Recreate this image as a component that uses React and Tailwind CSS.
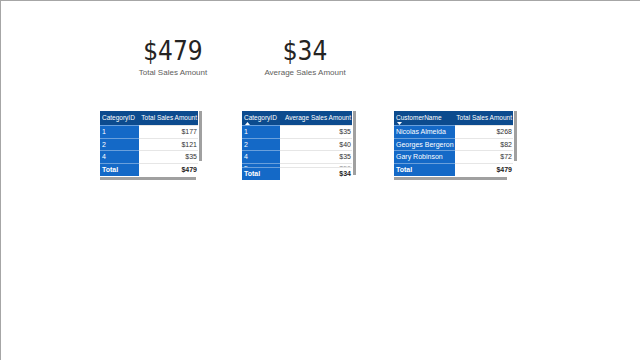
const tableFont = "font-['Segoe_UI','Liberation_Sans',sans-serif]";

const Kpi = ({ value, label }) => (
  <div className="w-[106px] flex flex-col items-center">
    <p className="font-['DejaVu_Sans_Condensed','Roboto',sans-serif] text-[26px] leading-[30px] text-[#252423]">
      {value}
    </p>
    <p className={`${tableFont} text-[8px] leading-[10px] mt-[2px] text-[#605e5c]`}>
      {label}
    </p>
  </div>
);

const SortArrow = ({ up }) => (
  <svg width="5" height="3" viewBox="0 0 5 3" className="ml-[1px]">
    {up ? <path d="M0 3 L2.5 0 L5 3 Z" fill="#fff" /> : <path d="M0 0 L2.5 3 L5 0 Z" fill="#fff" />}
  </svg>
);

const DataTable = ({ c1, c2, h1, h2, rows, total, sort, partial, vbar, hbar }) => (
  <div className={`${tableFont} flex flex-col`}>
    <div className="flex">
      <div className="flex flex-col">
        <div className="flex h-[14px] bg-[#0c4b8e] text-white text-[6.5px] leading-[9px]">
          <div className={`${c1} pl-[2px] pt-[2px] flex flex-col`}>
            <span>{h1}</span>
            {sort && <SortArrow up={sort === "up"} />}
          </div>
          <div className={`${c2} pt-[2px] pr-[1px] text-right whitespace-nowrap overflow-hidden`}>{h2}</div>
        </div>
        {rows.map(([a, b], i) => (
          <div key={i} className="flex h-[12.5px] text-[7px] leading-[12px]">
            <div className={`${c1} bg-[#1469c7] text-white pl-[2px] border-t border-[#6aa0dc] whitespace-nowrap overflow-hidden`}>{a}</div>
            <div className={`${c2} bg-white text-[#333] text-right pr-[1px] border-t border-[#e6e6e6]`}>{b}</div>
          </div>
        ))}
        {partial && (
          <div className="flex h-[4px] text-[7px] leading-[10px] overflow-hidden">
            <div className={`${c1} bg-[#1469c7] text-white pl-[2px] border-t border-[#6aa0dc]`}>{partial[0]}</div>
            <div className={`${c2} bg-white text-[#999] text-right pr-[1px] border-t border-[#e6e6e6]`}>{partial[1]}</div>
          </div>
        )}
        <div className="flex h-[13px] text-[7px] leading-[12px] font-bold">
          <div className={`${c1} bg-[#1469c7] text-white pl-[2px] border-t border-[#6aa0dc]`}>Total</div>
          <div className={`${c2} bg-white text-[#222] text-right pr-[1px] border-t border-[#e6e6e6]`}>{total}</div>
        </div>
      </div>
      {vbar && (
        <div className="w-[5px] pl-[1px]">
          <div className={`w-[3px] ${vbar} bg-[#a0a0a0]`} />
        </div>
      )}
    </div>
    {hbar && <div className={`h-[3px] mt-[1px] ${hbar} bg-[#a0a0a0]`} />}
  </div>
);

export default function App() {
  return (
    <div className="w-[640px] h-[360px] bg-white border-l border-t border-[#a6a6a6] overflow-hidden">
      <div className="flex pl-[119px] pt-[35px] gap-[26px]">
        <Kpi value="$479" label="Total Sales Amount" />
        <Kpi value="$34" label="Average Sales Amount" />
      </div>
      <div className="flex items-start pl-[99px] mt-[33px]">
        <DataTable
          c1="w-[39px]"
          c2="w-[59px]"
          h1="CategoryID"
          h2="Total Sales Amount"
          rows={[["1", "$177"], ["2", "$121"], ["4", "$35"]]}
          total="$479"
          vbar="h-[50px]"
          hbar="w-[96px]"
        />
        <div className="ml-[39px]">
          <DataTable
            c1="w-[38px]"
            c2="w-[72px]"
            h1="CategoryID"
            h2="Average Sales Amount"
            rows={[["1", "$35"], ["2", "$40"], ["4", "$35"]]}
            partial={["5", "$50"]}
            total="$34"
            sort="up"
            vbar="h-[64px]"
          />
        </div>
        <div className="ml-[37px]">
          <DataTable
            c1="w-[61px]"
            c2="w-[58px]"
            h1="CustomerName"
            h2="Total Sales Amount"
            rows={[["Nicolas Almeida", "$268"], ["Georges Bergeron", "$82"], ["Gary Robinson", "$72"]]}
            total="$479"
            sort="down"
            vbar="h-[50px]"
            hbar="w-[113px]"
          />
        </div>
      </div>
    </div>
  );
}
